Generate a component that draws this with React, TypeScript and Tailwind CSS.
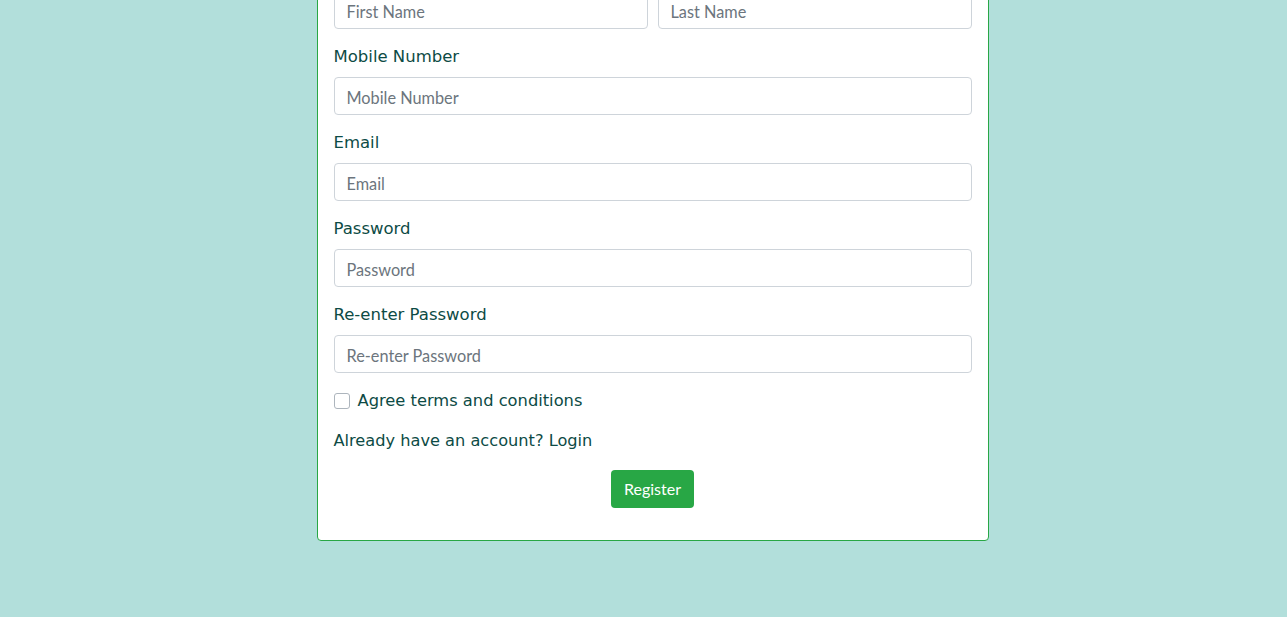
import React from "react";

const labelCls = "block text-[16.5px] leading-6 mb-2 text-[#0d4b45] font-['DejaVu_Sans',sans-serif]";
const inputCls =
  "block w-full h-[38px] px-3 pt-[2px] rounded-[4px] border border-[#ced4da] bg-white text-[16.3px] text-[#495057] placeholder:text-[#6c757d] font-['Lato',sans-serif] outline-none";

export default function App() {
  return (
    <div className="min-h-[617px] bg-[#b2dfdb] flex justify-center overflow-hidden pl-[18px]">
      <div className="w-[672px] -mt-[26px] self-start bg-white border border-[#28a745] rounded-[4px] p-4">
        <div className="flex gap-[10px] mb-4">
          <input className={inputCls} placeholder="First Name" />
          <input className={inputCls} placeholder="Last Name" />
        </div>
        <div className="mb-4">
          <label className={labelCls}>Mobile Number</label>
          <input className={inputCls} placeholder="Mobile Number" />
        </div>
        <div className="mb-4">
          <label className={labelCls}>Email</label>
          <input className={inputCls} placeholder="Email" />
        </div>
        <div className="mb-4">
          <label className={labelCls}>Password</label>
          <input className={inputCls} placeholder="Password" />
        </div>
        <div className="mb-4">
          <label className={labelCls}>Re-enter Password</label>
          <input className={inputCls} placeholder="Re-enter Password" />
        </div>
        <div className="flex items-center h-6 mb-4">
          <span className="w-4 h-4 rounded-[3px] border border-[#adb5bd] bg-white mr-2" />
          <span className="text-[16.3px] leading-6 text-[#0d4b45] font-['DejaVu_Sans',sans-serif]">
            Agree terms and conditions
          </span>
        </div>
        <p className="text-[16.2px] leading-6 text-[#0d4b45] font-['DejaVu_Sans',sans-serif] mb-[17px]">
          Already have an account? Login
        </p>
        <div className="flex justify-center mb-4">
          <button className="h-[38px] px-[13px] rounded-[4px] bg-[#28a745] text-white text-[16px] font-['Lato',sans-serif]">
            Register
          </button>
        </div>
      </div>
    </div>
  );
}
